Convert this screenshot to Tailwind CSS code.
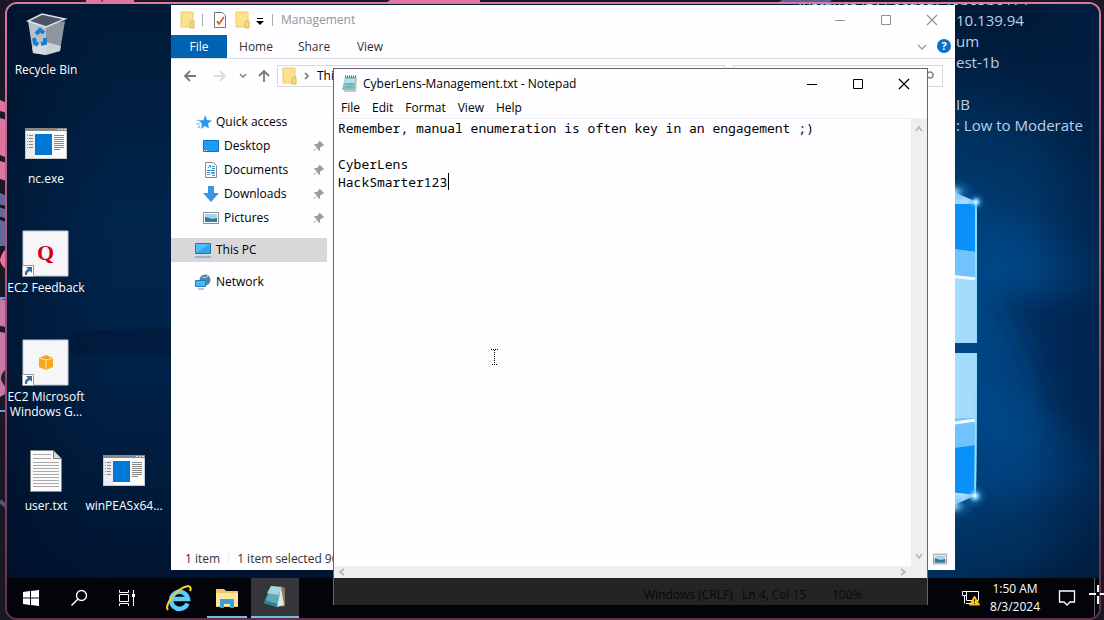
<!DOCTYPE html>
<html lang="en">
<head>
<meta charset="utf-8">
<title>Remote desktop</title>
<script src="https://cdn.jsdelivr.net/npm/@tailwindcss/browser@4"></script>
</head>
<body class="relative h-screen overflow-hidden bg-[#1a1824] font-['Open_Sans','Noto_Sans',sans-serif] text-xs text-black">

<!-- Host desktop artwork around the session frame -->
<svg class="absolute inset-0 h-full w-full" viewBox="0 0 1104 620" preserveAspectRatio="none" aria-hidden="true">
  <path d="M86 0h48v6H86zM390 0h90v6h-98z" fill="#e8749c"/><path d="M102 0v6" stroke="#1a1824"/>
  <path d="M782 0h50l-8 6h-50z" fill="#5e6196"/>
  <path d="M0 100l7 3v10l-7-2zM0 118l7 2v38l-7-3zM0 161l7 2v18l-7-2z" fill="#dd759f"/>
  <path d="M0 193l7 3v50H0z" fill="#66679b"/><path d="M0 206l7 2M0 218l7 3" stroke="#15131e" stroke-width="3"/>
  <path d="M7 247q-7 8-7 14 2 6 7 9z" fill="#ee7193"/>
  <path d="M0 299l7 1v27l-7-1zM0 332l7 1v60l-7 4z" fill="#c877a8"/>
  <path d="M0 298h7M0 411h7" stroke="#6a9af0" stroke-width="2"/>
  <path d="M7 368q-7 6-6 12l6 10z" fill="#23212f"/>
  <path d="M0 501l7 6" stroke="#55517c" stroke-width="4"/>
</svg>

<!-- Session frame -->
<div class="absolute top-[2px] right-[3px] bottom-0 left-[5px] rounded-xl bg-linear-to-b from-[#d878a3] to-[#613049] p-0.5">
<div class="relative flex h-full flex-col overflow-hidden rounded-[10px] bg-[#001a3b]">
  <svg class="absolute inset-0 h-full w-full" viewBox="7 4 1092 614" preserveAspectRatio="none" aria-hidden="true">
    <defs>
      <linearGradient id="sky" x1="0" x2="0" y1="0" y2="1"><stop offset="0" stop-color="#001a38"/><stop offset=".35" stop-color="#00254b"/><stop offset=".6" stop-color="#002248"/><stop offset="1" stop-color="#00122c"/></linearGradient>
      <radialGradient id="glow" gradientUnits="userSpaceOnUse" cx="920" cy="350" r="330"><stop offset="0" stop-color="#004b8e"/><stop offset=".35" stop-color="#00407a"/><stop offset=".7" stop-color="#003362" stop-opacity=".8"/><stop offset="1" stop-color="#001e40" stop-opacity="0"/></radialGradient>
      <radialGradient id="star"><stop offset="0" stop-color="#fff"/><stop offset=".25" stop-color="#8edcff" stop-opacity=".8"/><stop offset=".6" stop-color="#2a9bea" stop-opacity=".25"/><stop offset="1" stop-color="#1489e8" stop-opacity="0"/></radialGradient>
      <linearGradient id="leftshade"><stop offset="0" stop-color="#000d24" stop-opacity=".5"/><stop offset="1" stop-color="#001733" stop-opacity="0"/></linearGradient>
      <linearGradient id="rightshade"><stop offset="0" stop-color="#001f45" stop-opacity="0"/><stop offset="1" stop-color="#001f45" stop-opacity=".6"/></linearGradient>
      <filter id="soft" x="-20%" y="-20%" width="140%" height="140%"><feGaussianBlur stdDeviation="12"/></filter>
    </defs>
    <path d="M7 4h1092v614H7z" fill="url(#sky)"/>
    <path d="M7 4h110v614H7z" fill="url(#leftshade)"/>
    <path d="M70 331l101-3v28l-101-1z" fill="#001331" opacity=".45"/>
    <path d="M600 4h499v614H600z" fill="url(#glow)"/>
    <g filter="url(#soft)"><path d="M977 210l122 45v50L977 290zM977 380l122 80v30l-122 10z" fill="#0057a8" opacity=".25"/><path d="M1000 290l110 0v170l-60-50z" fill="#00204a" opacity=".55"/></g>
    <path d="M1030 4h69v614h-69z" fill="url(#rightshade)"/>
    <path d="M900 192l77 9v142h-77z" fill="#a4dcfd"/><path d="M900 204h76v48l-76-10z" fill="#0a90fb"/><path d="M900 242l76 10v25h-76z" fill="#70c4fb"/><path d="M940 275l36 4" stroke="#f3fbff" stroke-width="3"/>
    <path d="M900 353h77l-1 142h-76z" fill="#a4dcfd"/><path d="M900 420l76-2v27l-76 10z" fill="#70c4fb"/><path d="M900 455l76-10v49h-76z" fill="#0a90fb"/><path d="M940 425l36-5" stroke="#f3fbff" stroke-width="3"/>
    <path d="M976 202v141M976 353q0 90-1 142" stroke="#8ee0ff" stroke-width="2"/>
    <path d="M940 186l37 16-37 2zM940 511l37-16-37-4z" fill="#b5e6ff"/>
    <circle cx="976" cy="202" r="10" fill="url(#star)"/><circle cx="975" cy="496" r="12" fill="url(#star)"/><ellipse cx="950" cy="192" rx="26" ry="14" fill="url(#star)"/><ellipse cx="950" cy="506" rx="26" ry="14" fill="url(#star)"/>
  </svg>

  <!-- Instance information painted on the wallpaper -->
  <div class="absolute top-[-15px] left-[791px] text-[15px] leading-[21px] whitespace-pre text-[#bfcfe2]" aria-label="Instance details"><p>Instance ID: i-0cd0a740b03b0171</p><div class="pl-[158px]"><p>10.139.94</p><p>um</p><p>est-1b</p><p> </p><p>IB</p><p>: Low to Moderate</p></div></div>

  <!-- Desktop icons -->
  <main class="relative grid flex-1 auto-rows-[109px] grid-cols-[78px_78px] content-start pt-2 text-center leading-[15px] text-white">
    <a href="#" class="flex flex-col items-center"><svg class="h-[46px] w-12" viewBox="0 0 48 46"><path d="M6 9l18 4v30l-13-2z" fill="#b9c0c7"/><path d="M24 13l19-4-5 30-14 4z" fill="#8e969f"/><path d="M6 9l14-7 23 5-19 8z" fill="#4a5664" stroke="#dce3e8" stroke-width="1.5"/><path d="M10 35l14-5 15 4-1 5-14 4-13-2z" fill="#dfe4e7" opacity=".75"/><g fill="none" stroke="#157fd5" stroke-width="4"><path d="M14 22l4-4 4 3M12 26l1 5 3 2M19 32l4-1v-5"/></g></svg><span class="mt-1 w-20">Recycle Bin</span></a><span></span>
    <a href="#" class="flex flex-col items-center"><svg class="h-[46px] w-12" viewBox="0 0 48 46"><use href="#exe"/></svg><span class="mt-1">nc.exe</span></a><span></span>
    <a href="#" class="flex flex-col items-center"><svg class="h-12 w-12" viewBox="0 0 48 48"><path d="M1 1h45v45H1z" fill="#f6f5f7" stroke="#c4c8cf"/><text x="23.500" y="30" text-anchor="middle" font-family="Liberation Serif" font-size="22" font-weight="bold" fill="#d6001c">Q</text><use href="#shortcut"/></svg><span class="mt-0.5 w-20">EC2 Feedback</span></a><span></span>
    <a href="#" class="flex flex-col items-center"><svg class="h-12 w-12" viewBox="0 0 48 48"><path d="M1 1h45v45H1z" fill="#f6f5f7" stroke="#c4c8cf"/><path d="M17 19l7-3 7 3v9l-7 3-7-3z" fill="#f5a81c"/><path d="M17 19l7 2 7-2M24 21v10" fill="none" stroke="#fce2a5"/><use href="#shortcut"/></svg><span class="mt-0.5 w-20">EC2 Microsoft Windows G...</span></a><span></span>
    <a href="#" class="flex flex-col items-center"><svg class="h-[46px] w-12" viewBox="0 0 48 46"><path d="M8.500 2.500h23l8 8v33h-31z" fill="#fafafa" stroke="#888"/><path d="M31.500 2.500v8h8z" fill="#ddd" stroke="#777"/><path d="M11 6.500h18M11 10.500h18M11 14.500h26M11 17.500h26M11 20.500h26M11 23.500h26M11 26.500h26M11 29.500h26M11 32.500h26M11 35.500h26M11 38.500h26" stroke="#aaa"/></svg><span class="mt-1">user.txt</span></a>
    <a href="#" class="flex flex-col items-center"><svg class="h-[46px] w-12" viewBox="0 0 48 46"><use href="#exe"/></svg><span class="mt-1">winPEASx64...</span></a>
  </main>

  <!-- Taskbar -->
  <footer class="relative flex h-10 shrink-0 items-stretch justify-between bg-[#020409] text-white">
    <nav class="flex">
      <button aria-label="Start" class="grid w-12 place-items-center"><svg class="h-4 w-4" viewBox="0 0 16 16" fill="#fff"><path d="M0 2l7-1v6.500H0zM8 1l8-1v7.500H8zM0 8.500h7V15l-7-1zM8 8.500h8V16l-8-1z"/></svg></button>
      <button aria-label="Search" class="grid w-12 place-items-center"><svg class="h-[18px] w-[18px]" viewBox="0 0 18 18" fill="none" stroke="#fff" stroke-width="1.400"><circle cx="11.500" cy="6.500" r="5"/><path d="M8 10l-6.500 6.500"/></svg></button>
      <button aria-label="Task view" class="grid w-12 place-items-center"><svg class="h-4 w-[18px]" viewBox="0 0 18 16" fill="none" stroke="#fff"><path d="M1.500 0v2.500h9V0M1.500 16v-2.500h9V16M1.500 4.500h9v7h-9zM15.500 0v16"/><path d="M14 4h3v3h-3z" fill="#fff" stroke="none"/></svg></button>
      <button aria-label="Internet Explorer" class="grid w-14 place-items-center"><svg class="h-7 w-7" viewBox="0 0 28 28" fill="none"><path d="M22.500 19.500A8.500 8.500 0 1 1 23 15H8" stroke="#5bcdf8" stroke-width="4.500"/><path d="M3 26C-1 21 12 4 23 2c3 0 3 3 2 5" stroke="#f7ca2e" stroke-width="2.200"/></svg></button>
      <button aria-label="File Explorer" class="grid w-10 place-items-center border-b-2 border-[#76b9ed] pt-px"><svg class="h-6 w-6" viewBox="0 0 24 24"><path d="M1 3h8l2 2h12v16H1z" fill="#efc969"/><path d="M1 7h22v13H1z" fill="#fce7a1"/><path d="M5 22v-9h14v9h-4v-4H9v4z" fill="#39a1d9"/></svg></button>
      <button aria-label="Notepad" class="ml-1 grid w-12 place-items-center border-b-2 border-[#76b9ed] bg-[#343639]"><svg class="h-6 w-6" viewBox="0 0 24 24"><path d="M17 1l5 2v18l-4 1z" fill="#8b7a58"/><path d="M8 1l10 1-4 20-13-4z" fill="#5fa9b9"/><path d="M8 1l10 1-2 8-12-2z" fill="#a6d3dc"/><path d="M1 18l13 4 1-3-13-4z" fill="#2b8298"/><path d="M18 2l3 18-7 2z" fill="#dfe9ea"/></svg></button>
    </nav>
    <div class="flex items-center pr-1">
      <button aria-label="Network status" class="mr-2.5"><svg class="h-[18px] w-[18px]" viewBox="0 0 18 18" fill="none" stroke="#fff"><path d="M4.500 2.500h12v9h-12zM.5 2.500h4v4h-4zM2.500 6.500v8M4 14.500h5"/><path d="M12.500 7l5 9h-10z" fill="#fdbf21" stroke="#fdbf21"/><path d="M12.500 10v3M12.500 14v1" stroke="#3b2d04"/></svg></button>
      <button class="text-center leading-[18px]"><time datetime="2024-08-03T01:50" class="block">1:50 AM</time><span class="block">8/3/2024</span></button>
      <button aria-label="Notifications" class="mr-[18px] ml-[18px]"><svg class="h-[18px] w-[18px]" viewBox="0 0 18 18" fill="none" stroke="#fff" stroke-width="1.300"><path d="M1.500 2h15v11H12l-3 3-3-3H1.500z"/></svg></button>
      <span class="h-full w-px bg-[#5b606b]"></span>
    </div>
  </footer>
</div>
</div>

<!-- Explorer window -->
<section aria-label="Management" class="absolute top-[5px] right-[149px] bottom-[50px] left-[171px] flex flex-col bg-[#fefdff]">
  <header class="flex h-[30px] items-center pl-2">
    <svg class="h-5 w-[18px]" viewBox="0 0 18 20"><use href="#folder"/></svg>
    <span class="mx-1 mr-2 ml-[5px] h-3 w-px bg-[#aaa]"></span>
    <svg class="ml-[3px] h-4 w-3" viewBox="0 0 12 16"><path d="M.5.5h8l3 3v12H.5z" fill="#fff" stroke="#777"/><path d="M3 9l2 3 5-7" fill="none" stroke="#d95a2b" stroke-width="1.700"/></svg>
    <svg class="ml-2 h-5 w-[18px]" viewBox="0 0 18 20"><use href="#folder"/></svg>
    <svg class="mt-1 ml-1 h-2 w-2" viewBox="0 0 8 8"><path d="M1 0h6v1H1zM0 3h8L4 7z"/></svg>
    <span class="ml-2 h-3 w-px bg-[#aaa]"></span>
    <h1 class="ml-2 text-[#969696]">Management</h1>
    <div class="mr-[17px] ml-auto flex items-center gap-[34px] text-[#929292]"><button aria-label="Minimize Management"><svg class="h-3 w-3" viewBox="0 0 12 12"><use href="#min"/></svg></button><button aria-label="Maximize Management"><svg class="h-3 w-3" viewBox="0 0 12 12"><use href="#max"/></svg></button><button aria-label="Close Management"><svg class="h-3 w-3" viewBox="0 0 12 12"><use href="#close"/></svg></button></div>
  </header>
  <nav class="flex h-6 items-stretch border-b border-[#dedee0] text-[#333]">
    <button class="w-14 bg-[#0063b1] text-white">File</button><button class="w-[58px]">Home</button><button class="w-[58px]">Share</button><button class="w-[54px]">View</button>
    <button aria-label="Expand ribbon" class="mr-2.5 ml-auto"><svg class="h-2 w-2.5" viewBox="0 0 10 8" fill="none" stroke="#999" stroke-width="1.300"><path d="M1 2l4 4 4-4"/></svg></button><button aria-label="Help" class="mt-1 mr-1 h-3.5 w-3.5 rounded-full bg-[#0870c9] text-[11px] leading-3.5 font-bold text-white">?</button>
  </nav>
  <div class="flex h-[34px] items-center px-3">
    <button aria-label="Back"><svg class="h-3.5 w-3.5" viewBox="0 0 14 14" fill="none" stroke="#777" stroke-width="1.800"><path d="M7 2L2 7l5 5M2 7h11"/></svg></button>
    <button aria-label="Forward" class="ml-4"><svg class="h-3.5 w-3.5" viewBox="0 0 14 14" fill="none" stroke="#ddd" stroke-width="1.800"><path d="M7 2l5 5-5 5M1 7h11"/></svg></button>
    <button aria-label="Recent" class="ml-3"><svg class="h-2 w-2" viewBox="0 0 8 8" fill="none" stroke="#888" stroke-width="1.600"><path d="M1 2l3 3 3-3"/></svg></button>
    <button aria-label="Up" class="ml-2.5"><svg class="h-3.5 w-3.5" viewBox="0 0 14 14" fill="none" stroke="#777" stroke-width="1.800"><path d="M2 7l5-5 5 5M7 2v11"/></svg></button>
    <div class="ml-1.5 flex h-[22px] flex-1 items-center border border-[#d9d9d9] pl-[3px]"><svg class="h-5 w-[18px]" viewBox="0 0 18 20"><use href="#folder"/></svg><svg class="ml-1 h-2 w-2" viewBox="0 0 8 8" fill="none" stroke="#777" stroke-width="1.600"><path d="M2 1l3 3-3 3"/></svg><span class="ml-1.5">This PC</span></div>
    <div class="ml-2 flex h-[22px] w-[210px] items-center justify-end border border-[#d9d9d9] pr-2"><svg class="h-3 w-3" viewBox="0 0 12 12" fill="none" stroke="#888" stroke-width="1.500"><circle cx="8" cy="5" r="3"/><path d="M6 8l-4 4"/></svg></div>
  </div>
  <ul class="w-[156px] flex-1 pt-[17px] leading-6">
    <li class="flex h-6 items-center gap-1 pl-[25px]"><svg class="h-4 w-4" viewBox="0 0 16 16"><path d="M9 1l2 5 5 .5-4 3 1 5-4-2.500L5 15l1-5-3-3.500L7.500 6z" fill="#2d99e6"/><path d="M1 6l4 1M0 10h4M2 14l2-2" stroke="#64b8ef" stroke-width="1.200"/></svg>Quick access</li>
    <li class="flex h-6 items-center gap-[5px] pl-8"><svg class="h-4 w-4" viewBox="0 0 16 16"><path d="M.5 2.500h15v11H.5z" fill="#1c9cf3" stroke="#1173bd"/><path d="M1 12.500h3" stroke="#fff" stroke-dasharray="1"/></svg>Desktop<svg class="mr-0.5 ml-auto h-3 w-3" viewBox="0 0 12 12"><use href="#pin"/></svg></li>
    <li class="flex h-6 items-center gap-[5px] pl-8"><svg class="h-4 w-4" viewBox="0 0 16 16"><path d="M2.500.5h8l3 3v12h-11z" fill="#fff" stroke="#8a8a8a"/><path d="M5 6l2-3 1 3M4 8.500h8M4 10.500h3M4 12.500h3M9 4.500h3M9 6.500h3M9 13.500h3" fill="none" stroke="#3391d0"/><path d="M8 10h4v2H8z" fill="#5a9fc8"/></svg>Documents<svg class="mr-0.5 ml-auto h-3 w-3" viewBox="0 0 12 12"><use href="#pin"/></svg></li>
    <li class="flex h-6 items-center gap-[5px] pl-8"><svg class="h-4 w-4" viewBox="0 0 16 16"><path d="M5 0h6v7h5l-8 9-8-9h5z" fill="#3a94df"/></svg>Downloads<svg class="mr-0.5 ml-auto h-3 w-3" viewBox="0 0 12 12"><use href="#pin"/></svg></li>
    <li class="flex h-6 items-center gap-[5px] pl-8"><svg class="h-4 w-4" viewBox="0 0 16 16"><use href="#picture"/></svg>Pictures<svg class="mr-0.5 ml-auto h-3 w-3" viewBox="0 0 12 12"><use href="#pin"/></svg></li>
    <li class="mt-2 flex h-6 items-center gap-[5px] bg-[#d9d7d9] pl-6"><svg class="h-4 w-4" viewBox="0 0 16 16"><path d="M.5 1.500h15v10H.5z" fill="#55bdf5" stroke="#34759e"/><path d="M1 11L15 2v9z" fill="#2fa5ec"/><path d="M0 15h16" stroke="#5d91b2"/></svg>This PC</li>
    <li class="mt-2 flex h-6 items-center gap-[5px] pl-6"><svg class="h-4 w-4" viewBox="0 0 16 16"><circle cx="10" cy="6" r="5.500" fill="#4f86a8"/><path d="M7 3q4 2 6-1" stroke="#bfe2e9" fill="none"/><path d="M.5 6.500h10v6H.5z" fill="#47b8f5" stroke="#217eb8"/><path d="M3 15h6" stroke="#529dc5"/></svg>Network</li>
  </ul>
  <footer class="flex h-[22px] items-center pr-2 pl-3.5 text-[#333]"><span>1 item</span><span class="mx-2 h-3 w-px bg-[#eee]"></span><span>1 item selected 90 bytes</span><button aria-label="Large thumbnails" class="ml-auto"><svg class="h-3.5 w-3.5" viewBox="0 0 16 16"><use href="#picture"/></svg></button></footer>
</section>

<!-- Notepad window -->
<section aria-label="Notepad" class="absolute top-[68px] right-[176px] bottom-[15px] left-[333px] flex flex-col border border-b-0 border-[#65656a]">
  <header class="flex h-[29px] items-center bg-[#fefdff] pr-[17px] pl-2"><svg class="h-[18px] w-[17px]" viewBox="0 0 17 18"><path d="M5 3h10l-1 14H2z" fill="#d5c9a5"/><path d="M3 2h11l-1 13H0z" fill="#7fc3ce"/><path d="M3 4h10v4H2z" fill="#b5e0e5"/><path d="M4 9h8M3 12h8" stroke="#64a8b6"/><path d="M3 1.500h12" stroke="#3c626b" stroke-width="2" stroke-dasharray="1"/></svg><h2 class="ml-1">CyberLens-Management.txt - Notepad</h2>
    <div class="ml-auto flex items-center gap-[34px]"><button aria-label="Minimize"><svg class="h-3 w-3" viewBox="0 0 12 12"><use href="#min"/></svg></button><button aria-label="Maximize"><svg class="h-3 w-3" viewBox="0 0 12 12"><use href="#max"/></svg></button><button aria-label="Close"><svg class="h-3 w-3" viewBox="0 0 12 12"><use href="#close"/></svg></button></div></header>
  <nav class="flex h-[21px] items-center gap-3 border-b border-[#efeef1] bg-[#fefdff] pl-[7px]"><button>File</button><button>Edit</button><button>Format</button><button>View</button><button>Help</button></nav>
  <div class="flex min-h-0 flex-1 bg-[#fefdff]">
    <div class="relative flex-1"><textarea aria-label="Document text" spellcheck="false" class="block h-full w-full resize-none overflow-hidden bg-transparent px-1 font-['Noto_Sans_Mono','DejaVu_Sans_Mono','Liberation_Mono',monospace] text-[13px] leading-[18px] whitespace-pre outline-none">Remember, manual enumeration is often key in an engagement ;)

CyberLens
HackSmarter123</textarea><span class="absolute top-[54px] left-[114px] h-[17px] w-px bg-black"></span></div>
    <div class="flex w-4 flex-col items-center justify-between bg-[#efeef0] py-1.5"><svg class="h-2 w-2" viewBox="0 0 8 8" fill="none" stroke="#b5b3b7" stroke-width="1.600"><path d="M1 6l3-4 3 4"/></svg><svg class="h-2 w-2" viewBox="0 0 8 8" fill="none" stroke="#b5b3b7" stroke-width="1.600"><path d="M1 2l3 4 3-4"/></svg></div>
  </div>
  <div class="flex h-3 items-center justify-between bg-[#efefef] pr-5 pl-1"><svg class="h-2 w-2" viewBox="0 0 8 8" fill="none" stroke="#b5b3b7" stroke-width="1.600"><path d="M6 1L2 4l4 3"/></svg><svg class="h-2 w-2" viewBox="0 0 8 8" fill="none" stroke="#b5b3b7" stroke-width="1.600"><path d="M2 1l4 3-4 3"/></svg></div>
  <footer class="flex h-[27px] items-center bg-[#242424] pt-1.5 text-[#080808]"><span class="ml-auto w-[92px] whitespace-nowrap">Windows (CRLF)</span><span class="ml-1.5 w-[90px]">Ln 4, Col 15</span><span class="w-[95px]">100%</span></footer>
</section>

<!-- Pointers -->
<svg class="absolute top-[349px] left-[491px] h-4 w-[7px]" viewBox="0 0 7 16" fill="none" stroke="#000" stroke-dasharray="1"><path d="M0 .5h7M3.500 1v14M1 15.500h5"/></svg>
<svg class="absolute top-[585px] left-[1089px] h-[19px] w-[19px]" viewBox="0 0 19 19" stroke="#f5f5f5" stroke-width="2"><path d="M9 0v7M9 11v8M0 9h7M11 9h8"/></svg>

<!-- Shared shapes -->
<svg class="absolute h-0 w-0" aria-hidden="true"><defs>
  <g id="folder"><path d="M2 2h12v15H2z" fill="#fbe38d" stroke="#edcc68"/><path d="M12 11h3v7h-4v-5z" fill="#f6d978" stroke="#dfba55"/></g>
  <g id="exe"><path d="M3 7h42v31H3z" fill="#c9cbce"/><path d="M4 10h40v27H4z" fill="#fbfbfb"/><path d="M3 7h42v3H3z" fill="#858789"/><path d="M36 8.500h2M39 8.500h2M42 8.500h2" stroke="#ddd"/><path d="M4 12h9v25H4z" fill="#eeecee"/><path d="M13 13h17v21H13z" fill="#0078d7"/><path d="M5 14.500h6M5 17.500h6M5 20.500h6M5 23.500h6M5 26.500h6" stroke="#888" stroke-dasharray="1 1 4 1"/><path d="M32 14.500h10M32 16.500h10M32 18.500h10M32 20.500h10M32 22.500h10M32 24.500h10M32 26.500h10M32 28.500h6" stroke="#888"/></g>
  <g id="shortcut"><path d="M.5 35.500h11v11H.5z" fill="#fff" stroke="#999"/><path d="M4 37h6v6l-2-2q-3 1-3 4H3q-1-4 3-6z" fill="#376ba7"/></g>
  <g id="min"><path d="M1 6.500h10" stroke="currentColor"/></g>
  <g id="max"><path d="M1.500 1.500h9v9h-9z" fill="none" stroke="currentColor"/></g>
  <g id="close"><path d="M1 1l10 10M11 1L1 11" stroke="currentColor" stroke-width="1.200"/></g>
  <g id="pin"><path d="M7 1l4 4-1 1-1 0-2 2v2L6 11 4 8l-3 3-.5-.5L4 7 1 5l1-1h2l2-2V1z" fill="#999ca0"/></g>
  <g id="picture"><path d="M.5 2.500h15v11H.5z" fill="#fff" stroke="#8d8d8d"/><path d="M2 4h12v8H2z" fill="#a4d2ef"/><path d="M2 7q4 1 7 2l5-1v4H2z" fill="#3e7282"/><path d="M2 10q7-1 12 1v1H2z" fill="#2681b9"/></g>
</defs></svg>
</body>
</html>
